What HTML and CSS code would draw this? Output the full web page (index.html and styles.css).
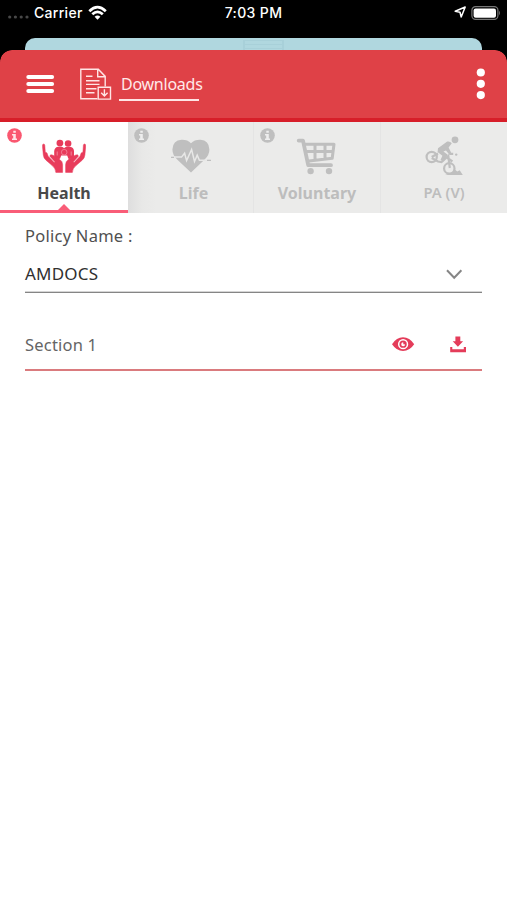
FILE: index.html
```html
<!DOCTYPE html>
<html lang="en">
<head>
<meta charset="utf-8">
<title>Downloads</title>
<link rel="stylesheet" href="styles.css">
</head>
<body>
<div class="status">
  <div class="status-left">
    <svg class="signal" width="22" height="6" viewBox="8 14 22 6" fill="#484848"><circle cx="9.7" cy="17" r="1.6"/><circle cx="15.4" cy="17" r="1.6"/><circle cx="21.2" cy="17" r="1.6"/><circle cx="27" cy="17" r="1.6"/></svg>
    <span class="carrier">Carrier</span>
    <svg class="wifi" width="20" height="16" viewBox="88 5 20 16" fill="none" stroke="#fff" stroke-width="2.7"><path d="M89.3 11.2Q97.5 3.2 105.8 11.2M92.3 14.3Q97.5 9.3 102.8 14.3"/><path d="M94.6 16.7Q97.5 14.2 100.4 16.7L97.5 19.7Z" fill="#fff" stroke="none"/></svg>
  </div>
  <span class="time">7:03 PM</span>
  <div class="status-right">
    <svg width="13" height="13" viewBox="454 7 13 13" fill="none" stroke="#fff" stroke-width="1.5" stroke-linejoin="round"><path d="M465.2 8L461.2 18L460 13.2L455.2 12.3Z"/></svg>
    <svg width="29" height="15" viewBox="471 6 29 15"><rect x="471.9" y="6.7" width="26" height="12.6" rx="3.6" fill="none" stroke="#777" stroke-width="1.2"/><rect x="473.6" y="8.4" width="22.4" height="9.3" rx="2" fill="#fff"/><path d="M499.2 10.7Q501 13 499.2 15.3Z" fill="#777"/></svg>
  </div>
</div>
<div class="backdrop"><div class="behind"><span class="behind-mark"></span></div></div>
<div class="sheet">
<header class="bar">
  <svg class="menu" width="29" height="20" viewBox="26 74 29 20" fill="#fff"><rect x="26.3" y="74.9" width="27.8" height="4" rx="2"/><rect x="26.3" y="82" width="27.8" height="4" rx="2"/><rect x="26.3" y="89" width="27.8" height="4" rx="2"/></svg>
  <svg class="doc" width="32" height="32" viewBox="80 68 32 32" fill="none" stroke="#ffe5e5" stroke-width="1.4"><path d="M97.5 98.8H80.8V69.2H98.3L105.2 76.4V86.5M97.7 69.5V76.7H105M86 76.3H92.5M86 80.8H99.5M86 84.4H99.5M86 88.8H96.5M86 92.8H94.5"/><path d="M98.2 87.2H110.5V99.1H98.2ZM104.4 89.3V95.6M101.2 92.7L104.4 96L107.6 92.7"/></svg>
  <h1>Downloads</h1>
  <svg class="more" width="10" height="32" viewBox="475.5 68.5 10 32" fill="#fff"><circle cx="480.3" cy="73" r="4.1"/><circle cx="480.3" cy="84.3" r="4.1"/><circle cx="480.3" cy="95.6" r="4.1"/></svg>
</header>
</div>
<nav class="tabs">
  <div class="tab active">
    <svg class="info" viewBox="0 0 15 15"><circle cx="7.5" cy="7.5" r="7.3"/><path d="M6.3 2.7H8.8V4.8H6.3ZM5 6.1H8.8V10.4H10V12H5V10.4H6.2V7.6H5Z" fill="#ffe4e8"/></svg>
    <svg class="icon" width="44" height="40" viewBox="42 136 44 40"><circle cx="59.9" cy="143.1" r="3.4"/><circle cx="68.1" cy="143.5" r="3.3"/><path d="M54.2 156.5V151Q54.7 147 58.5 146.8H61.5Q63.2 147 64 148.2Q65 147 67 146.8H70Q73.6 147.4 74 151V156.5Q72.5 159.6 68.4 158.8L67.2 155.4H61.2L60 158.8Q55.4 159.6 54.2 156.5Z"/><path d="M57.2 151.5V155.5M71.2 151.5V155.5" stroke="#f6a5b3" stroke-width=".7"/><circle cx="64.2" cy="152.2" r="2.8" stroke="#f6a5b3" stroke-width=".6"/><path id="hand" d="M43.5 144Q42.2 144 42.5 146.5L43.3 155Q43.5 158 46 160.2L52.2 165.6Q55.8 168.7 55.8 172.4H62.6V164.5Q62.6 161.2 60 159.7L53 155.2Q49.9 153.7 49.8 156.2L54.8 161.7L54.2 162.4L48.2 156.3L47 153Q45.8 152 45.3 152.4L44.8 145.2Q44.6 144 43.5 144Z" stroke="#e83b5b" stroke-width=".5"/><use href="#hand" transform="translate(128.2 0) scale(-1 1)"/></svg>
    <span class="label">Health</span>
    <i class="pointer"></i>
  </div>
  <div class="tab life">
    <svg class="info" viewBox="0 0 15 15"><circle cx="7.5" cy="7.5" r="7.3"/><path d="M6.3 2.7H8.8V4.8H6.3ZM5 6.1H8.8V10.4H10V12H5V10.4H6.2V7.6H5Z" fill="#eee"/></svg>
    <svg class="icon" width="44" height="40" viewBox="169 136 44 40"><path d="M191 172.6L177.4 159.8Q172.4 155 172.4 149.4Q172.8 140.5 181.5 139.8Q187.5 139.6 191 143.2Q194.5 139.6 200.5 139.8Q209 140.5 209.4 149.4Q209.4 155 204.4 159.8Z"/><path d="M172 157.1H181.5L184.6 153.2L186.6 160.6L191.6 149.5L194.5 161.5L197.2 155.2L199.4 160.3H210" fill="none" stroke="#e8e8e7" stroke-width="1.5"/><path d="M171 157.3H174M207 160.4H211" stroke="#bfbfbf" stroke-width="1.3"/></svg>
    <span class="label">Life</span>
  </div>
  <div class="tab">
    <svg class="info" viewBox="0 0 15 15"><circle cx="7.5" cy="7.5" r="7.3"/><path d="M6.3 2.7H8.8V4.8H6.3ZM5 6.1H8.8V10.4H10V12H5V10.4H6.2V7.6H5Z" fill="#eee"/></svg>
    <svg class="icon" width="44" height="40" viewBox="295 136 44 40"><path d="M298.7 140.6H303L308.2 165.2H331" fill="none" stroke="#bfbfbf" stroke-width="3.8" stroke-linecap="round" stroke-linejoin="round"/><path d="M304.5 144.3H334L332.2 158.3L307 161.2M306 151.4H333M315 144V159.5M325 144V158.5" fill="none" stroke="#bfbfbf" stroke-width="3" stroke-linejoin="round"/><circle cx="310.6" cy="171.1" r="3.2"/><circle cx="329" cy="171.1" r="3.2"/></svg>
    <span class="label">Voluntary</span>
  </div>
  <div class="tab">
    <svg class="icon" width="44" height="40" viewBox="422 136 44 40"><circle cx="455" cy="139.8" r="3.4"/><path d="M438 148.3L447.2 141.6Q450 141 451.8 143.2L448.6 147.6L451.2 152.8H453.2V155H449.6L446 150.4L443.4 151.4L447.8 154.7L443.4 161.5L440.5 160L442.4 155.7L437.6 152Z"/><circle cx="456.2" cy="154.6" r="1.2"/><g fill="none" stroke="#bfbfbf"><circle cx="431.7" cy="157" r="5.1" stroke-width="2.2"/><circle cx="449.3" cy="168.4" r="5.2" stroke-width="2.2"/><path d="M431.7 157L438 153.5M431.7 158L438 161.5L441.5 162L448.3 156L449.8 168M447.5 158L452.4 161.5" stroke-width="2.2"/></g><path d="M445 174.9L451 173L455.2 169.7L457.2 171.6L459.7 170.2L462.8 174.9Z"/></svg>
    <span class="label small">PA (V)</span>
  </div>
</nav>
<main>
  <label class="caption">Policy Name :</label>
  <div class="select"><span>AMDOCS</span>
    <svg width="18" height="12" viewBox="445 268 18 12" fill="none" stroke="#868686" stroke-width="2"><path d="M447 270.3L454.2 277.7L461.4 270.3"/></svg>
  </div>
  <div class="row"><span>Section 1</span>
    <svg class="eye" width="24" height="18" viewBox="391 335 24 18"><path d="M392 344.2Q396.5 337.4 403 337.3Q409.6 337.4 414.2 344.2Q409.6 350.9 403 351Q396.5 350.9 392 344.2Z" fill="#e43c5a"/><circle cx="403.1" cy="344.2" r="4.4" fill="#e43c5a" stroke="#fff" stroke-width="1.5"/><path d="M403.2 342.3A2 2 0 1 0 405.2 344.5L403.4 344.2Z" fill="#fff"/></svg>
    <svg width="18" height="18" viewBox="449 335 18 18" fill="#e43c5a"><path d="M455.4 336.4H460.3V341.2H463.1L457.9 346.8L452.7 341.2H455.4ZM450.2 347H452.3V349.2H463.8V347H466V352.3H450.2Z"/></svg>
  </div>
</main>
</body>
</html>
```
FILE: styles.css
```css
* { box-sizing: border-box; }
body { margin: 0; width: 507px; height: 900px; overflow: hidden; background: #fff; font-family: "Noto Sans", "Open Sans", sans-serif; }
svg { display: block; flex: none; }
.status { height: 38px; background: #000; color: #fff; display: grid; grid-template-columns: 1fr auto 1fr; align-items: start; padding: 4px 7px 0 8px; font: 500 14px/17px Inter, sans-serif; }
.status-left, .status-right { display: flex; align-items: flex-start; }
.signal { margin-top: 10px; }
.carrier { margin-left: 4px; width: 50px; letter-spacing: .3px; white-space: nowrap; }
.wifi { margin-left: 4px; margin-top: 1px; }
.time { letter-spacing: .35px; position: relative; left: -.5px; }
.status-right { justify-content: flex-end; gap: 4px; padding-top: 2px; }
.backdrop { background: #000; padding: 0 25px; }
.behind { height: 12px; background: #b0d7df; border-radius: 10px 10px 0 0; display: flex; justify-content: center; }
.behind-mark { width: 41px; height: 10px; margin: 2px 0 0 20px; border: solid #a8d0d9; border-width: 1px 2px 0; background: linear-gradient(#b0d7df 3px, #a8d0d9 3px 4px, #b0d7df 4px 7px, #a8d0d9 7px 8px, #b0d7df 8px); }
.sheet { background: #000; }
.bar { height: 72px; background: linear-gradient(#df4147 68px, #d71e29 68px); border-radius: 12px 12px 0 0; clip-path: inset(0 round 12px 12px 0 0); display: flex; align-items: flex-start; padding: 18px 21px 0 26px; }
.menu { margin-top: 6px; }
.doc { margin-left: 25px; }
h1 { margin: 4px 0 0 7px; padding-left: 2px; width: 80px; height: 29px; border-bottom: 2px solid #ffe5e5; color: #ffe9e9; font-size: 16px; font-weight: 400; line-height: 25px; letter-spacing: -.25px; white-space: nowrap; }
.more { margin-left: auto; }
.tabs { height: 91px; display: grid; grid-template-columns: 128px 126px 127px 126px; background: #ebebea; }
.tab { position: relative; display: flex; flex-direction: column; align-items: center; padding-top: 14px; color: #bdbdbd; fill: #bfbfbf; border-right: 1px solid #e4e4e4; }
.tab:last-child { border: 0; }
.life { background: linear-gradient(90deg, #dedede, #e8e8e7 14px, #ebebea 28px); }
.active { background: #fff; color: #494949; fill: #e83b5b; border: 0; border-bottom: 3px solid #f95d78; }
.info { position: absolute; left: 7px; top: 6px; width: 15px; height: 15px; overflow: visible; }
.active .info { fill: #fa5770; }
.life .info, .tab:nth-child(3) .info { left: 6px; }
.label { font-size: 16px; line-height: 22px; margin-top: 6px; font-weight: 700; white-space: nowrap; }
.life .label { padding-left: 6px; }
.label.small { font-size: 14.8px; font-weight: 600; margin-top: 5px; }
.pointer { position: absolute; bottom: 0; left: 58px; border: solid transparent; border-width: 0 6px 6px; border-bottom-color: #f95d78; }
main { padding: 11px 25px 0; }
.caption { display: block; height: 24px; font-size: 16.5px; line-height: 24px; color: #505050; letter-spacing: .25px; }
.select { height: 45px; display: flex; align-items: center; justify-content: space-between; padding: 8px 19px 0 0; border-bottom: 1px solid #858585; box-shadow: inset 0 -1px #d5d5d5; font-size: 17px; line-height: 24px; color: #303030; letter-spacing: .2px; }
.row { height: 78px; display: flex; align-items: flex-start; padding: 42px 15px 0 0; border-bottom: 2px solid #da7b7e; font-size: 16.5px; line-height: 19px; color: #656565; letter-spacing: .2px; }
.eye { margin: 0 34px 0 auto; }
```
